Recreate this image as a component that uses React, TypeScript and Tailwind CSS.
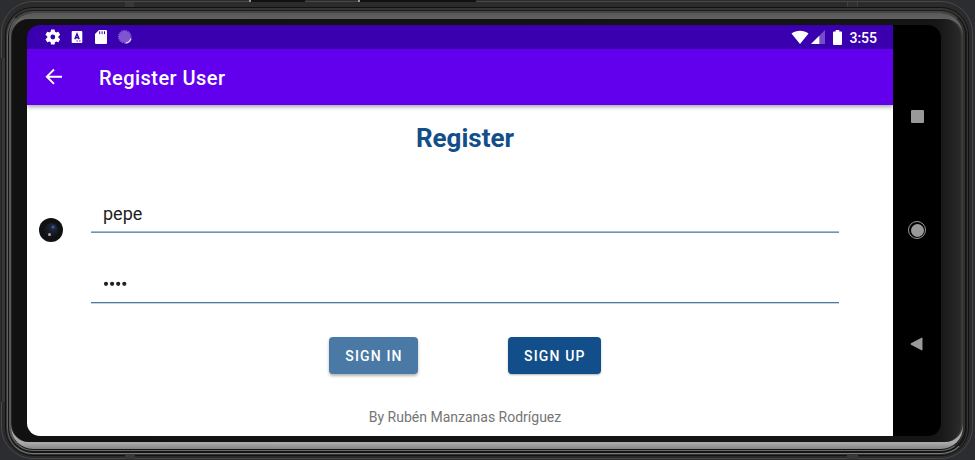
import type { ReactNode } from 'react';

function StatusBar() {
  return (
    <div className="flex h-6 shrink-0 items-center justify-between bg-[#3a00b0] pl-[18px] pr-4 text-white">
      <div className="flex items-center">
        <svg className="h-4 w-4" viewBox="1 1 22 22" fill="currentColor">
          <path d="M19.4 13a7.7 7.7 0 0 0 0-2l2.2-1.7a.5.5 0 0 0 .1-.6l-2.1-3.6a.5.5 0 0 0-.6-.2l-2.6 1a7.5 7.5 0 0 0-1.7-1L14.3 2.2a.5.5 0 0 0-.5-.4H9.7a.5.5 0 0 0-.5.4L8.8 4.9a8 8 0 0 0-1.7 1l-2.6-1a.5.5 0 0 0-.6.2L1.8 8.7a.5.5 0 0 0 .1.6L4.1 11a7.7 7.7 0 0 0 0 2l-2.2 1.7a.5.5 0 0 0-.1.6l2.1 3.6c.1.2.4.3.6.2l2.6-1a7.5 7.5 0 0 0 1.7 1l.4 2.7c0 .2.2.4.5.4h4.1c.2 0 .5-.2.5-.4l.4-2.7a7.5 7.5 0 0 0 1.7-1l2.6 1c.2.1.5 0 .6-.2l2.1-3.6a.5.5 0 0 0-.1-.6zM11.75 15.3a3.3 3.3 0 1 1 0-6.6 3.3 3.3 0 0 1 0 6.6z" />
        </svg>
        <svg className="ml-2 h-4 w-4" viewBox="0 0 16 16">
          <rect x="2.7" y="2" width="10.6" height="12" rx="1" fill="currentColor" />
          <path d="M5.8 10.2 8 4.9l2.2 5.3M6.5 8.7h3" fill="none" stroke="#3a00b0" strokeWidth="1.4" />
          <path d="M7.5 12h1.3M10.2 12h1.3" stroke="#3a00b0" />
        </svg>
        <svg className="ml-2 h-4 w-4" viewBox="0 0 16 16">
          <path d="M6 1h7a1 1 0 0 1 1 1v12a1 1 0 0 1-1 1H3a1 1 0 0 1-1-1V5z" fill="currentColor" />
          <path d="M6.7 2.3v2.8M9.1 2.3v2.8M11.5 2.3v2.8" stroke="#3a00b0" />
        </svg>
        <svg className="ml-2 h-4 w-4" viewBox="0 0 16 16" fill="none">
          <circle cx="7.7" cy="7.7" r="6" fill="#8055d2" />
          <circle cx="7.7" cy="7.7" r="6.3" stroke="#9c7cdc" strokeDasharray="1 .9" />
          <path d="M14 9.5a6.5 6.5 0 0 1-5.5 4.6" stroke="#e5dcf7" strokeWidth="1.3" />
        </svg>
      </div>
      <div className="flex items-center">
        <svg className="h-[14px] w-[18px]" viewBox="0 0 18 14" fill="currentColor">
          <path d="M.5 3.6C5.3-.2 12.7-.2 17.5 3.6L9 14z" />
        </svg>
        <svg className="ml-[2px] h-[14px] w-[14px]" viewBox="0 0 14 14" fill="currentColor">
          <path d="M14 0v14H0z" opacity=".3" />
          <path d="M8.3 5.7V14H0z" />
        </svg>
        <svg className="ml-2 h-[15px] w-[9px]" viewBox="0 0 9 15" fill="currentColor">
          <path d="M2.7 0h3.6v1.5H8a1 1 0 0 1 1 1V14a1 1 0 0 1-1 1H1a1 1 0 0 1-1-1V2.5a1 1 0 0 1 1-1h1.7z" />
        </svg>
        <span className="ml-[7px] pt-[2px] text-[14px] font-medium leading-[22px]">3:55</span>
      </div>
    </div>
  );
}

function AppBar() {
  return (
    <header className="z-10 flex h-14 shrink-0 items-center bg-[#6200ee] pl-[18px] text-white shadow-[0_2px_4px_rgba(0,0,0,0.35)]">
      <svg className="h-[18px] w-[18px]" viewBox="0 0 18 18" fill="none" stroke="currentColor" strokeWidth="1.9">
        <path d="M9 1.5 1.8 8.7 9 15.9M2 8.7h15" />
      </svg>
      <h1 className="ml-[36px] pt-[2px] text-[20px] font-medium leading-7 tracking-[0.45px]">Register User</h1>
    </header>
  );
}

function NavigationBar() {
  return (
    <nav className="flex w-12 shrink-0 flex-col items-center bg-black pt-[85px] text-[#999]">
      <div className="h-[13px] w-[13px] rounded-[1px] bg-current" />
      <div className="mt-[98px] flex h-[18px] w-[18px] items-center justify-center rounded-full border border-current">
        <div className="h-[13px] w-[13px] rounded-full bg-current" />
      </div>
      <svg className="mr-px mt-[98px] h-[14px] w-[13px]" viewBox="0 0 13 14" fill="currentColor">
        <path d="M1 6.3 11.5.7q1-.4 1 .5v11.6q0 .9-1 .5L1 7.7q-1-.7 0-1.4z" />
      </svg>
    </nav>
  );
}

function CameraHole() {
  return (
    <div className="absolute left-[12px] top-[193px] h-6 w-6 rounded-full bg-[#101112]">
      <div className="absolute left-[5px] top-[5px] h-[14px] w-[14px] rounded-full bg-[radial-gradient(circle_at_65%_30%,#29486b_0,#1b2233_25%,#17171d_60%,#101112_100%)]" />
      <div className="absolute left-[9px] top-[15px] h-[3px] w-[3px] rounded-full bg-[#aaa0bd] blur-[0.5px]" />
      <div className="absolute left-[13px] top-[8px] h-[2px] w-[2px] rounded-full bg-[#3975b0]" />
    </div>
  );
}

function RegisterForm() {
  return (
    <main className="flex flex-1 flex-col bg-white pl-16 pr-[54px]">
      <h2 className="mt-[15px] text-center text-[26px] font-bold leading-9 text-[#124e89]">Register</h2>
      <div className="mt-[36px] h-[40px] pl-3 pt-[11px] text-[18px] leading-[21px] text-[#212121]">pepe</div>
      <div className="-mt-px h-[2px] border-b border-t border-b-[#6e94b8] border-t-[#a4bcd3]" />
      <svg className="ml-3 mt-[48px] h-[6px] w-[26px]" viewBox="0 0 26 6" fill="#212121">
        <circle cx="3" cy="2.8" r="2.1" />
        <circle cx="9.1" cy="2.8" r="2.1" />
        <circle cx="15.2" cy="2.8" r="2.1" />
        <circle cx="21.3" cy="2.8" r="2.1" />
      </svg>
      <div className="mt-[15px] h-[2px] border-b border-t border-b-[#c4d4e2] border-t-[#4b79a5]" />
      <div className="mt-[33px] flex pl-[238px] text-[14px] font-medium tracking-[1.15px] text-white">
        <button className="h-[37px] w-[89px] rounded bg-[#4b79a5] pl-px pt-[2px] shadow-[0_2px_3px_rgba(0,0,0,0.3)]">SIGN IN</button>
        <button className="ml-[89.7px] h-[37px] w-[93.3px] rounded bg-[#124e89] pl-px pt-[2px] shadow-[0_1px_2px_rgba(0,0,0,0.3)]">SIGN UP</button>
      </div>
      <footer className="mt-[33px] text-center text-[14px] leading-5 text-[#757575]">By Rubén Manzanas Rodríguez</footer>
    </main>
  );
}

function DeviceFrame({ children }: { children: ReactNode }) {
  return (
    <div className="relative h-[460px] w-[975px] overflow-hidden bg-[#2c2d30] p-px pr-[2px]">
      <div className="h-[458px] rounded-[32px] border border-[#484848] bg-[#2b2b2b] px-[3px] pb-[2px] pt-[5px]">
        <div className="h-[449px] rounded-[28px] border border-[#111] bg-[#353535] px-px pb-px pt-[2px]">
          <div className="h-[444px] rounded-[26px] border border-b-[#777] border-l-[#606060] border-r-[#191919] border-t-[#1c1c1c] bg-[#151515] px-px pb-[2px]">
            <div className="h-[440px] rounded-[24px] border-x-2 border-b border-t-2 border-b-[#686868] border-l-[#585858] border-r-[#303030] border-t-[#444] bg-[#151515] pb-px">
              <div className="h-[436px] rounded-[22px] bg-[linear-gradient(to_bottom,#575757,#626262_6px,#777_50%,#aaa_430px,#858585_436px)] pb-[7px] pt-[6px]">
                <div className="h-[423px] rounded-[18px] border-l border-r-2 border-l-[#252525] border-r-[#3b3b3b] bg-[linear-gradient(to_right,#111_0,#151515_97%,#191919_98%,#2b2b2b_100%)] pb-[6px] pl-[15px] pr-[18px] pt-[6px]">
                  {children}
                </div>
              </div>
            </div>
          </div>
        </div>
      </div>
      <div className="absolute left-[249px] top-0 h-[2px] w-[56px] border-l-2 border-[#999] bg-[#111]" />
      <div className="absolute left-[358px] top-0 h-[2px] w-[118px] border-l-2 border-[#999] bg-[#111]" />
      <div className="absolute left-[125px] top-[2px] h-[5px] w-[9px] bg-[#383838]" />
      <div className="absolute left-[847px] top-[2px] h-[5px] w-[11px] border-x border-[#404040] bg-[#303030]" />
      <div className="absolute left-[125px] top-[455px] h-[4px] w-[10px] bg-[#393939]" />
      <div className="absolute left-[847px] top-[455px] h-[4px] w-[11px] bg-[#393939]" />
      <div className="absolute left-[1px] top-[58px] h-[344px] w-[4px] border-l border-[#242424] bg-[#373737]" />
    </div>
  );
}

export default function App() {
  return (
    <DeviceFrame>
      <div className="relative flex h-[411px] w-[914px] overflow-hidden rounded-[13px] font-['Roboto',sans-serif]">
        <div className="flex flex-1 flex-col">
          <StatusBar />
          <AppBar />
          <RegisterForm />
        </div>
        <NavigationBar />
        <CameraHole />
      </div>
    </DeviceFrame>
  );
}
